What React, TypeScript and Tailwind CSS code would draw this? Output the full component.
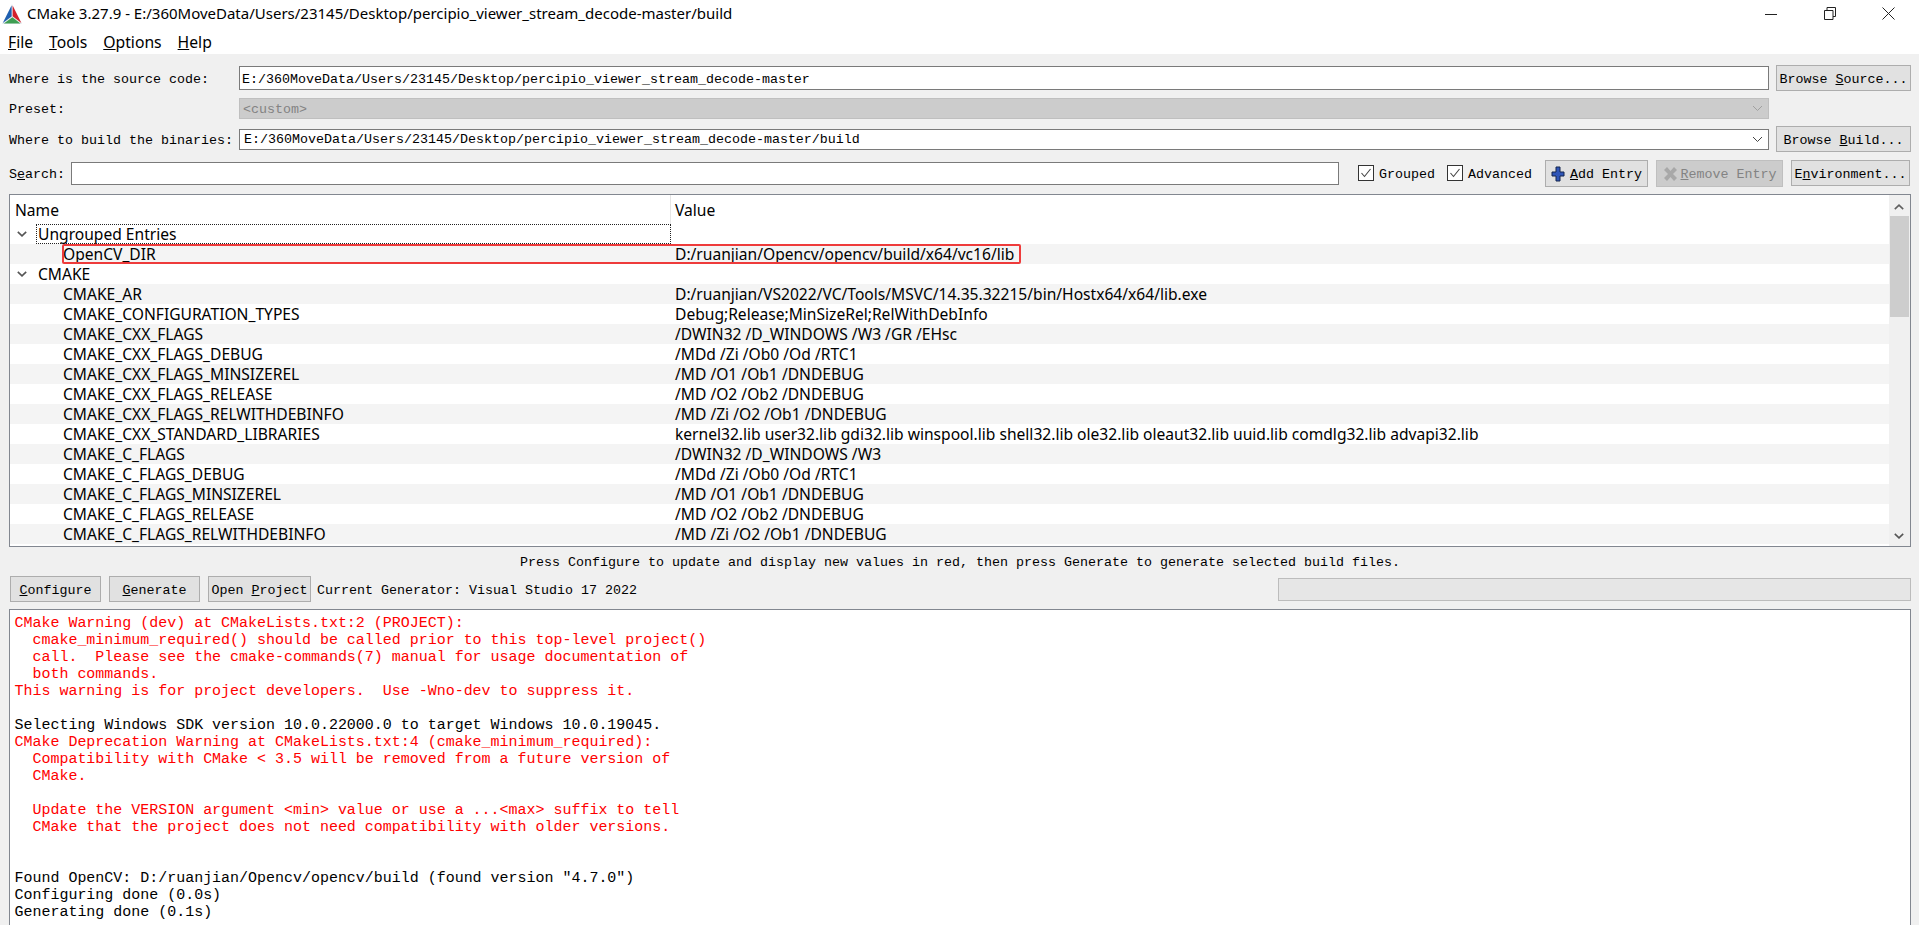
const treeRows: [string, string][] = [
  ['CMAKE_AR', 'D:/ruanjian/VS2022/VC/Tools/MSVC/14.35.32215/bin/Hostx64/x64/lib.exe'],
  ['CMAKE_CONFIGURATION_TYPES', 'Debug;Release;MinSizeRel;RelWithDebInfo'],
  ['CMAKE_CXX_FLAGS', '/DWIN32 /D_WINDOWS /W3 /GR /EHsc'],
  ['CMAKE_CXX_FLAGS_DEBUG', '/MDd /Zi /Ob0 /Od /RTC1'],
  ['CMAKE_CXX_FLAGS_MINSIZEREL', '/MD /O1 /Ob1 /DNDEBUG'],
  ['CMAKE_CXX_FLAGS_RELEASE', '/MD /O2 /Ob2 /DNDEBUG'],
  ['CMAKE_CXX_FLAGS_RELWITHDEBINFO', '/MD /Zi /O2 /Ob1 /DNDEBUG'],
  ['CMAKE_CXX_STANDARD_LIBRARIES', 'kernel32.lib user32.lib gdi32.lib winspool.lib shell32.lib ole32.lib oleaut32.lib uuid.lib comdlg32.lib advapi32.lib'],
  ['CMAKE_C_FLAGS', '/DWIN32 /D_WINDOWS /W3'],
  ['CMAKE_C_FLAGS_DEBUG', '/MDd /Zi /Ob0 /Od /RTC1'],
  ['CMAKE_C_FLAGS_MINSIZEREL', '/MD /O1 /Ob1 /DNDEBUG'],
  ['CMAKE_C_FLAGS_RELEASE', '/MD /O2 /Ob2 /DNDEBUG'],
  ['CMAKE_C_FLAGS_RELWITHDEBINFO', '/MD /Zi /O2 /Ob1 /DNDEBUG'],
]

const logLines: [string, boolean][] = [
  ['CMake Warning (dev) at CMakeLists.txt:2 (PROJECT):', true],
  ['  cmake_minimum_required() should be called prior to this top-level project()', true],
  ['  call.  Please see the cmake-commands(7) manual for usage documentation of', true],
  ['  both commands.', true],
  ['This warning is for project developers.  Use -Wno-dev to suppress it.', true],
  ['', false],
  ['Selecting Windows SDK version 10.0.22000.0 to target Windows 10.0.19045.', false],
  ['CMake Deprecation Warning at CMakeLists.txt:4 (cmake_minimum_required):', true],
  ['  Compatibility with CMake < 3.5 will be removed from a future version of', true],
  ['  CMake.', true],
  ['', false],
  ['  Update the VERSION argument <min> value or use a ...<max> suffix to tell', true],
  ['  CMake that the project does not need compatibility with older versions.', true],
  ['', false],
  ['', false],
  ['Found OpenCV: D:/ruanjian/Opencv/opencv/build (found version "4.7.0")', false],
  ['Configuring done (0.0s)', false],
  ['Generating done (0.1s)', false],
]

const mono = "font-['Liberation_Mono',monospace] text-[13.33px]"
const ui = "font-['Noto_Sans',sans-serif]"

function Chevron({ className }: { className: string }) {
  return (
    <svg width="11" height="7" viewBox="0 0 11 7" className={className}>
      <path d="M1 1l4.5 4.5L10 1" fill="none" stroke="currentColor" strokeWidth="1" />
    </svg>
  )
}

function TreeChevron() {
  return (
    <svg width="10" height="6" viewBox="0 0 10 6" className="text-[#555]">
      <path d="M0.8 0.8L5 4.8 9.2 0.8" fill="none" stroke="currentColor" strokeWidth="1.6" />
    </svg>
  )
}

function Btn({ children, className, disabled }: { children: React.ReactNode; className: string; disabled?: boolean }) {
  const look = disabled ? 'border-[#bfbfbf] bg-[#cccccc] text-[#838383]' : 'border-[#adadad] bg-[#e1e1e1] text-black'
  return (
    <button className={`flex items-center justify-center border pt-[3px] whitespace-pre ${look} ${mono} ${className}`}>
      {children}
    </button>
  )
}

function Check({ label }: { label: string }) {
  return (
    <div className={`flex items-center gap-[5px] ${mono}`}>
      <div className="flex h-4 w-4 items-center justify-center border border-[#333] bg-white">
        <svg width="12" height="10" viewBox="0 0 12 10">
          <path d="M1.5 5l3 3.5L10.5 1" fill="none" stroke="#444" strokeWidth="1.1" />
        </svg>
      </div>
      <span className="pt-[3px]">{label}</span>
    </div>
  )
}

function GroupRow({ label, focused }: { label: string; focused?: boolean }) {
  return (
    <div className="relative flex h-5 items-center">
      <div className="flex w-[26px] justify-end pr-[9px]">
        <TreeChevron />
      </div>
      <span className="pl-[2px] pt-[2px]">{label}</span>
      {focused && <div className="absolute left-[26px] top-0 h-[20px] w-[635px] border border-dotted border-[#222]" />}
    </div>
  )
}

function Row({ name, value, index, children }: { name: string; value: string; index: number; children?: React.ReactNode }) {
  return (
    <div className={`relative flex h-5 items-center ${index % 2 === 0 ? 'bg-[#f4f4f4]' : 'bg-white'}`}>
      <span className="w-[665px] shrink-0 pl-[53px] pt-[2px]">{name}</span>
      <span className="whitespace-nowrap pt-[2px]">{value}</span>
      {children}
    </div>
  )
}

export default function App() {
  return (
    <div className="flex h-[925px] w-full flex-col overflow-hidden bg-[#f0f0f0] text-black">
      {/* title bar */}
      <div className="flex h-[27px] items-center bg-white">
        <svg width="20" height="20" viewBox="0 0 20 20" className="ml-[2px] shrink-0">
          <path d="M10 0L0 20h20z" fill="#e8edf2" />
          <path d="M9.600 1.500L0.800 19l8.800-6.500z" fill="#1f5fb0" />
          <path d="M10.600 1.500L19.400 19l-8.800-6.800z" fill="#d3202c" />
          <path d="M1.800 19.500h16.600l-8-6.200z" fill="#3f9e52" />
        </svg>
        <span className={`ml-[5px] text-[15px] ${ui}`}>CMake 3.27.9 - E:/360MoveData/Users/23145/Desktop/percipio_viewer_stream_decode-master/build</span>
        <div className="ml-auto flex pr-[1px]">
          <div className="flex h-[27px] w-[59px] items-center justify-center">
            <svg width="12" height="12" viewBox="0 0 12 12"><path d="M0 6.5h12" stroke="#222" /></svg>
          </div>
          <div className="flex h-[27px] w-[59px] items-center justify-center">
            <svg width="12" height="13" viewBox="0 0 12 13"><path d="M0.5 3.5h8.500v9h-8.500zM3 3.500V0.500h8.500v9H9" fill="none" stroke="#222" /></svg>
          </div>
          <div className="flex h-[27px] w-[59px] items-center justify-center">
            <svg width="13" height="13" viewBox="0 0 13 13"><path d="M0.500 0.500l12 12M12.500 0.500l-12 12" stroke="#222" fill="none" /></svg>
          </div>
        </div>
      </div>

      {/* menu bar */}
      <div className={`flex h-[27px] items-center gap-[16px] bg-white pl-[8px] pt-[4px] text-[15.7px] ${ui}`}>
        <span><u>F</u>ile</span>
        <span><u>T</u>ools</span>
        <span><u>O</u>ptions</span>
        <span><u>H</u>elp</span>
      </div>

      <div className="flex flex-1 flex-col pl-[9px] pr-[8px] pt-[11px]">
        <div className={`flex h-[26px] items-center ${mono}`}>
          <span className="w-[230px] shrink-0 whitespace-pre pt-[3px]">Where is the source code:</span>
          <div className="flex h-6 flex-1 items-center border border-[#7a7a7a] bg-white pl-[2px] pt-[3px]">E:/360MoveData/Users/23145/Desktop/percipio_viewer_stream_decode-master</div>
          <Btn className="ml-[7px] h-[26px] w-[135px]">Browse <u>S</u>ource...</Btn>
        </div>

        <div className={`mt-[7px] flex h-[21px] items-center ${mono}`}>
          <span className="w-[230px] shrink-0 pt-[3px]">Preset:</span>
          <div className="flex h-[21px] flex-1 items-center justify-between border border-[#bfbfbf] bg-[#cccccc] pl-[3px] pr-[5px] text-[#838383]">
            <span className="pt-[3px]">&lt;custom&gt;</span>
            <Chevron className="text-[#a0a0a0]" />
          </div>
          <div className="ml-[7px] w-[135px]" />
        </div>

        <div className={`mt-[7px] flex h-[26px] items-center ${mono}`}>
          <span className="w-[230px] shrink-0 whitespace-pre pt-[3px]">Where to build the binaries:</span>
          <div className="flex h-[21px] flex-1 items-center justify-between border border-[#7a7a7a] bg-white pl-[4px] pr-[5px]">
            <span className="pt-[2px]">E:/360MoveData/Users/23145/Desktop/percipio_viewer_stream_decode-master/build</span>
            <Chevron className="text-[#444]" />
          </div>
          <Btn className="ml-[7px] h-[26px] w-[135px]">Browse <u>B</u>uild...</Btn>
        </div>

        <div className={`mt-[8px] flex h-[27px] items-center ${mono}`}>
          <span className="w-[62px] shrink-0 pt-[3px]">S<u>e</u>arch:</span>
          <div className="h-[23px] w-[1268px] border border-[#7a7a7a] bg-white" />
          <div className="ml-[19px]"><Check label="Grouped" /></div>
          <div className="ml-[12px]"><Check label="Advanced" /></div>
          <Btn className="ml-[13px] h-[27px] w-[103px] gap-[5px]">
            <svg width="14" height="16" viewBox="0 0 14 16" className="-mt-[3px]">
              <path d="M5 1h4v5h4v4H9v5H5v-5H1V6h4z" fill="#2f55b8" stroke="#14264f" strokeWidth="1" />
            </svg>
            <span><u>A</u>dd Entry</span>
          </Btn>
          <Btn disabled className="ml-[8px] h-[27px] w-[127px] gap-[3px]">
            <svg width="15" height="16" viewBox="0 0 15 16" className="-mt-[3px]">
              <path d="M1 4l3-3 3.500 4L11 1l3 3-4 4 4 4-3 3-3.500-4L4 15l-3-3 4-4z" fill="#a8a8a8" />
            </svg>
            <span><u>R</u>emove Entry</span>
          </Btn>
          <Btn className="ml-[8px] h-[26px] w-[119px] self-start">E<u>n</u>vironment...</Btn>
        </div>

        {/* cache entries */}
        <div className={`relative mt-[7px] flex h-[353px] flex-col border border-[#828790] bg-white text-[15.6px] ${ui}`}>
          <div className="flex h-[29px] shrink-0 items-center">
            <div className="flex h-full w-[661px] items-center border-r border-[#e5e5e5] pl-[5px] pt-[2px]">Name</div>
            <div className="pl-[4px] pt-[2px]">Value</div>
          </div>
          <div className="w-[1880px]">
            <GroupRow label="Ungrouped Entries" focused />
            <Row name="OpenCV_DIR" value="D:/ruanjian/Opencv/opencv/build/x64/vc16/lib" index={0}>
              <div className="absolute left-[52px] top-0 h-[20px] w-[959px] rounded-[2px] border-2 border-[#ee3b3b]" />
            </Row>
            <GroupRow label="CMAKE" />
            {treeRows.map(([name, value], i) => (
              <Row key={name} name={name} value={value} index={i} />
            ))}
          </div>
          <div className="absolute bottom-0 right-0 top-0 flex w-[21px] flex-col items-center bg-[#f0f0f0] pr-[1px]">
            <svg width="10" height="6" viewBox="0 0 10 6" className="mt-[9px] text-[#606060]">
              <path d="M0.800 5.200L5 1.200 9.200 5.200" fill="none" stroke="currentColor" strokeWidth="1.600" />
            </svg>
            <div className="mt-[6px] h-[101px] w-[19px] bg-[#cdcdcd]" />
            <div className="mt-auto mb-[7px]"><TreeChevron /></div>
          </div>
        </div>

        <div className={`flex h-[29px] shrink-0 items-center justify-center pt-[2px] ${mono}`}>
          Press Configure to update and display new values in red, then press Generate to generate selected build files.
        </div>

        <div className={`flex h-[26px] shrink-0 items-center ${mono}`}>
          <Btn className="ml-[1px] h-[26px] w-[91px]"><span><u>C</u>onfigure</span></Btn>
          <Btn className="ml-[8px] h-[26px] w-[91px]"><span><u>G</u>enerate</span></Btn>
          <Btn className="ml-[8px] h-[26px] w-[103px]"><span>Open <u>P</u>roject</span></Btn>
          <span className="ml-[6px] pt-[3px]">Current Generator: Visual Studio 17 2022</span>
          <div className="ml-auto h-[23px] w-[633px] border border-[#bcbcbc] bg-[#e6e6e6]" />
        </div>

        <div className="mt-[7px] flex-1 overflow-hidden border border-b-0 border-[#828790] bg-white pl-[4.5px] pt-[5px] font-['Liberation_Mono',monospace] text-[14.98px] leading-[17px]">
          {logLines.map(([line, warn], i) => (
            <div key={i} className={`h-[17px] whitespace-pre ${warn ? 'text-[#ff0000]' : 'text-black'}`}>{line}</div>
          ))}
        </div>
      </div>
    </div>
  )
}
